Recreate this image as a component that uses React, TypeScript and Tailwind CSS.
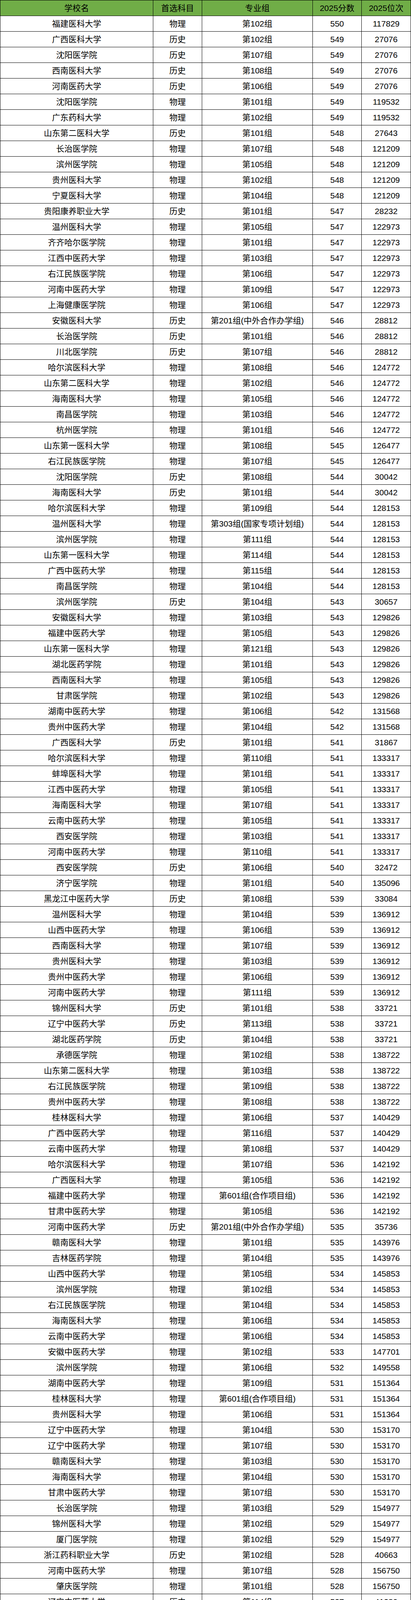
// Score table: 2025 admission cut-offs for medical schools.
// Rows are kept as plain text lines (name subject group score rank),
// a "|" in the name marks a line break inside the cell.
const RAW = `
福建医科大学 物理 第102组 550 117829
广西医科大学 历史 第102组 549 27076
沈阳医学院 历史 第107组 549 27076
西南医科大学 历史 第108组 549 27076
河南医药大学 历史 第106组 549 27076
沈阳医学院 物理 第101组 549 119532
广东药科大学 物理 第102组 549 119532
山东第二医科大学 历史 第101组 548 27643
长治医学院 物理 第107组 548 121209
滨州医学院 物理 第105组 548 121209
贵州医科大学 物理 第102组 548 121209
宁夏医科大学 物理 第104组 548 121209
贵阳康养职业大学 历史 第101组 547 28232
温州医科大学 物理 第105组 547 122973
齐齐哈尔医学院 物理 第101组 547 122973
江西中医药大学 物理 第103组 547 122973
右江民族医学院 物理 第106组 547 122973
河南中医药大学 物理 第109组 547 122973
上海健康医学院 物理 第106组 547 122973
安徽医科大学 历史 第201组(中外合作办学组) 546 28812
长治医学院 历史 第101组 546 28812
川北医学院 历史 第107组 546 28812
哈尔滨医科大学 物理 第108组 546 124772
山东第二医科大学 物理 第102组 546 124772
海南医科大学 物理 第105组 546 124772
南昌医学院 物理 第103组 546 124772
杭州医学院 物理 第101组 546 124772
山东第一医科大学 物理 第108组 545 126477
右江民族医学院 物理 第107组 545 126477
沈阳医学院 历史 第108组 544 30042
海南医科大学 历史 第101组 544 30042
哈尔滨医科大学 物理 第109组 544 128153
温州医科大学 物理 第303组(国家专项计划组) 544 128153
滨州医学院 物理 第111组 544 128153
山东第一医科大学 物理 第114组 544 128153
广西中医药大学 物理 第115组 544 128153
南昌医学院 物理 第104组 544 128153
滨州医学院 历史 第104组 543 30657
安徽医科大学 物理 第103组 543 129826
福建中医药大学 物理 第105组 543 129826
山东第一医科大学 物理 第121组 543 129826
湖北医药学院 物理 第101组 543 129826
西南医科大学 物理 第105组 543 129826
甘肃医学院 物理 第102组 543 129826
湖南中医药大学 物理 第106组 542 131568
贵州中医药大学 物理 第104组 542 131568
广西医科大学 历史 第101组 541 31867
哈尔滨医科大学 物理 第110组 541 133317
蚌埠医科大学 物理 第101组 541 133317
江西中医药大学 物理 第105组 541 133317
海南医科大学 物理 第107组 541 133317
云南中医药大学 物理 第105组 541 133317
西安医学院 物理 第103组 541 133317
河南中医药大学 物理 第110组 541 133317
西安医学院 历史 第106组 540 32472
济宁医学院 物理 第101组 540 135096
黑龙江中医药大学 历史 第108组 539 33084
温州医科大学 物理 第104组 539 136912
山西中医药大学 物理 第106组 539 136912
西南医科大学 物理 第107组 539 136912
贵州医科大学 物理 第103组 539 136912
贵州中医药大学 物理 第106组 539 136912
河南中医药大学 物理 第111组 539 136912
锦州医科大学 历史 第101组 538 33721
辽宁中医药大学 历史 第113组 538 33721
湖北医药学院 历史 第104组 538 33721
承德医学院 物理 第102组 538 138722
山东第二医科大学 物理 第103组 538 138722
右江民族医学院 物理 第109组 538 138722
贵州中医药大学 物理 第108组 538 138722
桂林医科大学 物理 第106组 537 140429
广西中医药大学 物理 第116组 537 140429
云南中医药大学 物理 第108组 537 140429
哈尔滨医科大学 物理 第107组 536 142192
广西医科大学 物理 第105组 536 142192
福建中医药大学 物理 第601组(合作项目组) 536 142192
甘肃中医药大学 物理 第105组 536 142192
河南中医药大学 历史 第201组(中外合作办学组) 535 35736
赣南医科大学 物理 第101组 535 143976
吉林医药学院 物理 第104组 535 143976
山西中医药大学 物理 第105组 534 145853
滨州医学院 物理 第102组 534 145853
右江民族医学院 物理 第104组 534 145853
海南医科大学 物理 第106组 534 145853
云南中医药大学 物理 第106组 534 145853
安徽中医药大学 物理 第102组 533 147701
滨州医学院 物理 第106组 532 149558
湖南中医药大学 物理 第109组 531 151364
桂林医科大学 物理 第601组(合作项目组) 531 151364
贵州医科大学 物理 第106组 531 151364
辽宁中医药大学 物理 第104组 530 153170
辽宁中医药大学 物理 第107组 530 153170
赣南医科大学 物理 第103组 530 153170
海南医科大学 物理 第104组 530 153170
甘肃中医药大学 物理 第107组 530 153170
长治医学院 物理 第103组 529 154977
锦州医科大学 物理 第102组 529 154977
厦门医学院 物理 第102组 529 154977
浙江药科职业大学 历史 第102组 528 40663
河南中医药大学 物理 第107组 528 156750
肇庆医学院 物理 第101组 528 156750
辽宁中医药大学 历史 第114组 527 41380
新疆医科大学 物理 第102组 527 158564
山西中医药大学 物理 第110组 526 160378
辽宁中医药大学 物理 第103组 526 160378
辽宁中医药大学 物理 第106组 526 160378
吉林医药学院 物理 第103组 526 160378
厦门医学院 物理 第103组 526 160378
成都中医药大学 历史 第203组(中外合作办学组) 525 42821
吉林医药学院 历史 第106组 525 42821
山西医科大学 物理 第105组 525 162191
锦州医科大学 物理 第103组 525 162191
辽宁中医药大学 物理 第108组 525 162191
长春中医药大学 物理 第101组 525 162191
贵州医科大学 物理 第104组 523 165927
湖南医药学院 物理 第102组 523 165927
齐齐哈尔医学院 历史 第105组 522 45082
宁夏医科大学 物理 第103组 522 167752
河南中医药大学|(与嵩山少林武术职业学院联合办学) 历史 第101组 521 45878
桂林医科大学 物理 第107组 521 169654
贵阳康养职业大学 物理 第102组 521 169654
新疆第二医学院 历史 第103组 520 46591
内蒙古医科大学 物理 第102组 520 171586
沈阳医学院 物理 第103组 520 171586
山东第一医科大学 物理 第120组 520 171586
贵州医科大学 物理 第201组(中外合作办学组) 520 171586
甘肃中医药大学 物理 第104组 520 171586
天津中医药大学 物理 第201组(中外合作办学组) 519 173388
吉林医药学院 物理 第102组 519 173388
河南中医药大学|(与嵩山少林武术职业学院联合办学) 历史 第102组 518 48095
成都中医药大学 物理 第201组(中外合作办学组) 518 175267
内蒙古医科大学 物理 第106组 518 175267
沈阳医学院 物理 第102组 517 177095
河南中医药大学 物理 第204组(中外合作办学组) 517 177095
重庆医科大学 物理 第206组(中外合作办学组) 516 178995
福建中医药大学 物理 第104组 516 178995
浙江药科职业大学 物理 第101组 516 178995
新疆医科大学 物理 第104组 515 180864
新疆医科大学 物理 第101组 514 182751
新疆第二医学院 物理 第104组 514 182751
桂林医科大学 历史 第606组(合作项目组) 513 52074
黑龙江中医药大学 物理 第103组 513 184632
内蒙古科技大学包头医学院 物理 第112组 513 184632
沈阳医学院 物理 第104组 513 184632
西安医学院 物理 第104组 513 184632
河南中医药大学 物理 第202组(中外合作办学组) 513 184632
锦州医科大学 物理 第104组 512 186510
贵阳康养职业大学 物理 第101组 512 186510
邢台医学院 物理 第101组 511 188315
长春中医药大学 物理 第102组 510 190228
牡丹江医科大学 物理 第104组 510 190228
川北医学院 物理 第109组 510 190228
长春中医药大学 物理 第206组(中外合作办学组) 509 192194
河南医药大学(中外课程合作) 物理 第201组(中外合作办学组) 509 192194
黑龙江中医药大学 物理 第105组 508 194093
辽宁中医药大学 物理 第110组 508 194093
牡丹江医科大学 物理 第101组 508 194093
牡丹江医科大学 物理 第105组 508 194093
甘肃中医药大学 物理 第108组 508 194093
沈阳医学院 物理 第106组 506 197957
昆明医科大学 物理 第201组(中外合作办学组) 506 197957
新疆第二医学院 物理 第101组 506 197957
黑龙江中医药大学 物理 第104组 504 201911
齐齐哈尔医学院 物理 第102组 504 201911
福建中医药大学 物理 第201组(中外合作办学组) 503 203899
济宁医学院 物理 第102组 502 205818
广西中医药大学 物理 第601组(合作项目组) 502 205818
牡丹江医科大学 物理 第106组 501 207737
甘肃中医药大学 物理 第106组 501 207737
齐齐哈尔医学院 物理 第103组 500 209695
`

const rows = RAW.trim()
  .split('\n')
  .map((line) => line.trim().split(/\s+/))

const HEADERS = ['学校名', '首选科目', '专业组', '2025分数', '2025位次']

const cell =
  'flex min-h-0 items-center justify-center overflow-hidden border-r border-b border-black text-center'

function Row({ values, header = false }: { values: string[]; header?: boolean }) {
  // only the two joint-programme rows wrap onto a second line
  const tall = values[0].includes('|')
  return (
    <div
      className={`grid grid-cols-[391px_125px_283px_125px_126px] grid-rows-[100%] overflow-hidden ${
        tall ? 'h-[54px]' : 'h-[40px]'
      } ${header ? 'bg-[#70ad47]' : 'bg-white'}`}
    >
      {values.map((v, i) => (
        <div key={i} className={cell}>
          {v.includes('|') ? (
            <div className="flex flex-col leading-[26px]">
              {v.split('|').map((part) => (
                <span key={part}>{part}</span>
              ))}
            </div>
          ) : (
            <span className="whitespace-nowrap leading-[24px]">{v}</span>
          )}
        </div>
      ))}
    </div>
  )
}

export default function App() {
  return (
    <div className="w-[1051px] bg-white font-['Liberation_Sans','Noto_Sans_CJK_SC',sans-serif] text-[21px] text-black">
      <div className="border-t border-l border-black">
        <Row values={HEADERS} header />
        {rows.map((r, i) => (
          <Row key={i} values={r} />
        ))}
      </div>
    </div>
  )
}
